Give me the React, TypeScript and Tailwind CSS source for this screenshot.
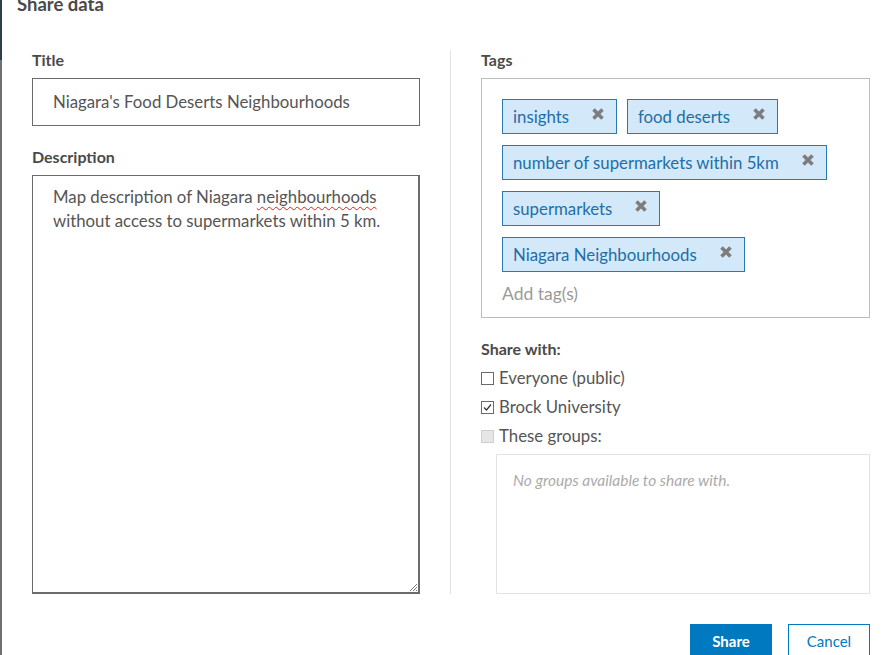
import React from "react";

const tags = [
  "insights",
  "food deserts",
  "number of supermarkets within 5km",
  "supermarkets",
  "Niagara Neighbourhoods",
];

function XIcon() {
  return (
    <svg width="14" height="14" viewBox="0 0 14 14" className="ml-[22px] -mt-[6px] shrink-0">
      <path d="M2.5 2.5 L11.5 11.5 M11.5 2.5 L2.5 11.5" stroke="#7d7d7d" strokeWidth="3.6" strokeLinecap="butt" />
    </svg>
  );
}

function Tag({ label }: { label: string }) {
  return (
    <div className="h-[35px] border border-[#2a79b3] bg-[#d3e9f9] pl-[10px] pr-[11px] flex items-center text-[16.8px] text-[#1e6ea8]">
      <span>{label}</span>
      <XIcon />
    </div>
  );
}

function Checkbox({ state }: { state: "off" | "on" | "disabled" }) {
  if (state === "disabled") {
    return <div className="w-[13px] h-[13px] border border-[#cfcfcf] bg-[#e6e6e6] shrink-0" />;
  }
  return (
    <div className="w-[13px] h-[13px] border border-[#6a6a6a] bg-white shrink-0 flex items-center justify-center">
      {state === "on" && (
        <svg width="11" height="11" viewBox="0 0 11 11">
          <path d="M2 5.5 L4.5 8 L9 2.5" stroke="#333" strokeWidth="1.2" fill="none" />
        </svg>
      )}
    </div>
  );
}

export default function App() {
  return (
    <div className="w-[890px] h-[655px] overflow-hidden bg-white flex font-[Lato,sans-serif]">
      <div className="w-[2px] flex flex-col shrink-0">
        <div className="h-[60px] bg-[#2e3f4c]" />
        <div className="flex-1 bg-[#707070]" />
      </div>
      <div className="flex-1 flex flex-col">
        <div className="h-[50px] shrink-0 pl-[15px]">
          <div className="-mt-[6px] text-[18.5px] leading-[20px] font-bold text-[#4a4a4a]">Share data</div>
        </div>
        <div className="flex shrink-0 pl-[30px]">
          <div className="w-[388px] flex flex-col">
            <div className="text-[16px] leading-[20px] font-bold text-[#4a4a4a]">Title</div>
            <div className="mt-[8px] h-[48px] border border-[#6b6b6b] px-[20px] flex items-center text-[16.8px] text-[#555]">
              Niagara's Food Deserts Neighbourhoods
            </div>
            <div className="mt-[21px] text-[16px] leading-[20px] font-bold text-[#4a4a4a]">Description</div>
            <div className="relative mt-[8px] h-[419px] border border-r-2 border-b-2 border-[#6b6b6b] px-[20px] pt-[9px] text-[16.8px] leading-[24px] text-[#555]">
              Map description of Niagara{" "}
              <span className="underline decoration-wavy decoration-[#e02020] decoration-1 underline-offset-[3px]">neighbourhoods</span>
              <br />
              without access to supermarkets within 5 km.
              <svg width="10" height="10" viewBox="0 0 10 10" className="absolute right-0 bottom-0">
                <path d="M9 2 L2 9 M9 5 L5 9 M9 8 L8 9" stroke="#777" strokeWidth="1" />
              </svg>
            </div>
          </div>
          <div className="ml-[30px] border-l border-[#e3e3e3] pl-[30px] w-[420px] flex flex-col">
            <div className="text-[16px] leading-[20px] font-bold text-[#4a4a4a]">Tags</div>
            <div className="mt-[8px] w-[389px] border border-[#bdbdbd] pt-[20px] pl-[20px] pr-[20px] pb-[12px]">
              <div className="flex flex-wrap gap-x-[10px] gap-y-[11px]">
                {tags.map((t) => (
                  <Tag key={t} label={t} />
                ))}
              </div>
              <div className="mt-[11px] leading-[22px] text-[17.5px] text-[#9a9a9a]">Add tag(s)</div>
            </div>
            <div className="mt-[21px] text-[16px] leading-[20px] font-bold text-[#4a4a4a]">Share with:</div>
            <div className="mt-[8px] flex flex-col gap-[7px] text-[16.8px] leading-[22px] text-[#555]">
              <div className="flex items-center gap-[5px]">
                <Checkbox state="off" />
                <span>Everyone (public)</span>
              </div>
              <div className="flex items-center gap-[5px]">
                <Checkbox state="on" />
                <span>Brock University</span>
              </div>
              <div className="flex items-center gap-[5px]">
                <Checkbox state="disabled" />
                <span>These groups:</span>
              </div>
            </div>
            <div className="mt-[7px] ml-[15px] w-[374px] h-[140px] border border-[#e3e3e3] px-[16px] pt-[15px]">
              <div className="italic text-[15.5px] leading-[20px] text-[#ababab]">No groups available to share with.</div>
            </div>
          </div>
        </div>
        <div className="mt-[30px] shrink-0 flex justify-end gap-[16px] pr-[20px]">
          <div className="w-[82px] h-[34px] bg-[#0079c1] border border-[#0079c1] text-white font-bold text-[15px] flex items-center justify-center">
            Share
          </div>
          <div className="w-[82px] h-[34px] bg-white border border-[#0079c1] text-[#0079c1] text-[15px] flex items-center justify-center">
            Cancel
          </div>
        </div>
      </div>
    </div>
  );
}
